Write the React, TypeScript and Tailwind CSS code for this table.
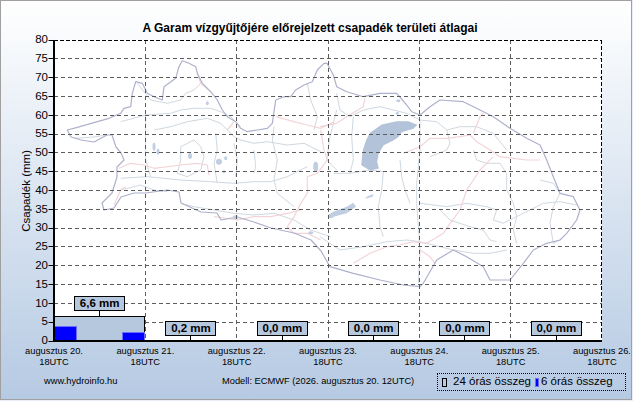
import React from "react";

type Pts = number[];

const conv = (ox: number, oy: number) => (a: Pts) => {
  const out: string[] = [];
  for (let i = 0; i < a.length; i += 2) {
    out.push(`${(ox + a[i] / 3).toFixed(1)},${(oy + a[i + 1] / 3).toFixed(1)}`);
  }
  return out.join(" ");
};
const z7 = conv(54, 50);
const z8 = conv(320, 50);

const OUTLINE =
  "67.3,130 77.3,127.3 97.3,121.7 109,118.3 120.7,113.3 124,108.3 130.7,106.7 132.3,93.3 135.7,81.7 142.3,83.3 147.3,93.3 154,96.7 162.3,100 164,86.7 175.7,78.3 179,66.7 182.3,60.7 189,63.3 195.7,66.7 197.3,73.3 202.3,83.3 210.7,91.7 217.3,100 222.3,110 227.3,116.7 235.7,121.7 240.7,128.3 247.3,131.7 257.3,130 267.3,128.3 272.3,123.3 275.7,100 284,96.7 290.7,96.7 295.7,90 304,85 312.3,81.7 317.3,70 324,63.3 327,63.3 333.3,75 336.7,86.7 346.7,91.7 363.3,96.7 380,93.3 396.7,93.3 406.7,105 411.7,111.7 420,115 430,106.7 440,100 463.3,101.7 480,110 493.3,116.7 510,128.3 526.7,138.3 540,145 546.7,160 553.3,176.7 560,193.3 573.3,196.7 580,210 576.7,220 566.7,233.3 560,240 546.7,243.3 533.3,250 523.3,263.3 510,280 490,280 483.3,266.7 466.7,256.7 453.3,250 436.7,260 423.3,283.3 420,286.7 403.3,285 380,280 353.3,273.3 330,266.7 321,251 311,240 294,233 271,228 254,222 237,217 221,220 217,213 201,212 181,203 179,192 167,190 146,193 134,193 121,197 114,208 104,210 102,203 112,193 117,177 117,167 124,160 121,153 116,147 112,135 107,135 94,142 81,140 71,137";

const RIVERS7: Pts[] = [
  [250, 100, 270, 125, 290, 150, 340, 160, 380, 150, 395, 130, 420, 120, 440, 100],
  [200, 215, 275, 195, 350, 190, 380, 180, 420, 175, 470, 175, 500, 185, 530, 200, 560, 230],
  [300, 240, 350, 230, 400, 215, 460, 205, 500, 220, 540, 260, 560, 270, 600, 280, 640, 275, 700, 285, 750, 280, 800, 305],
  [200, 385, 280, 380, 380, 390, 470, 395, 540, 400, 600, 395, 650, 395, 700, 380, 760, 350],
  [380, 460, 420, 470, 480, 480, 540, 490, 600, 495, 660, 490, 720, 510, 770, 540, 830, 560],
  [200, 420, 260, 405, 300, 420, 340, 425],
  [275, 190, 275, 330, 290, 380],
  [485, 250, 490, 300, 480, 340, 490, 400],
  [540, 280, 550, 330, 545, 380],
  [600, 300, 605, 350, 600, 370],
  [660, 230, 655, 270, 670, 330, 660, 390, 670, 430, 720, 470],
  [380, 290, 420, 270, 440, 290, 450, 320, 440, 360, 400, 380, 370, 370, 380, 330, 380, 290],
  [60, 265, 110, 262, 160, 255],
  [760, 100, 770, 150, 790, 200, 780, 240],
];
const PINK7: Pts[] = [
  [195, 355, 230, 340, 270, 345, 300, 355, 380, 345, 430, 340, 460, 345, 465, 375],
  [180, 465, 200, 420, 215, 410],
  [430, 70, 440, 100, 470, 125],
  [520, 240, 540, 215],
  [665, 200, 720, 215, 760, 225, 800, 235, 840, 215],
  [800, 240, 810, 300, 820, 330, 790, 370, 760, 380, 760, 430, 740, 460, 720, 500, 700, 530, 720, 550, 760, 550, 800, 570],
  [480, 500, 550, 510, 600, 500, 650, 500, 700, 490, 740, 480],
];
const RIVERS8: Pts[] = [
  [50, 130, 60, 180, 90, 200, 130, 180, 180, 170, 220, 180, 260, 190, 300, 210, 350, 215, 380, 240, 390, 280, 380, 300, 330, 320],
  [40, 370, 90, 370, 150, 360, 190, 365, 185, 420, 175, 470, 180, 530, 190, 560],
  [300, 210, 300, 300, 290, 400, 290, 460, 300, 600, 295, 700],
  [240, 330, 245, 380, 255, 420, 270, 460],
  [300, 460, 380, 470, 440, 460, 500, 470, 530, 480, 520, 510, 550, 520, 610, 490, 670, 460, 720, 455, 770, 465],
  [360, 480, 390, 510, 450, 530, 490, 540, 510, 570, 530, 575],
  [460, 300, 470, 330, 500, 340, 540, 340, 560, 370, 560, 420, 580, 460, 590, 500, 580, 540, 590, 580],
  [0, 560, 60, 600, 130, 590, 200, 575, 260, 570, 300, 575, 400, 600, 460, 610, 510, 610, 560, 600],
  [660, 390, 700, 400, 720, 430, 700, 470, 690, 520, 700, 580, 720, 570],
  [50, 180, 30, 260, 20, 330, 50, 360],
  [100, 200, 95, 260, 100, 330, 90, 370],
  [380, 240, 420, 230, 470, 230, 520, 250, 560, 300],
];
const PINK8: Pts[] = [
  [0, 230, 50, 220, 80, 200, 130, 170, 135, 145],
  [250, 310, 300, 290, 330, 265, 380, 265, 420, 260, 450, 255, 470, 275, 510, 300, 540, 320, 580, 325, 620, 330, 660, 330],
  [520, 320, 480, 360, 440, 420, 420, 480, 390, 520, 370, 550, 320, 580, 280, 575, 240, 585, 200, 590, 150, 610, 100, 640],
  [300, 600, 330, 620, 345, 640],
  [460, 250, 480, 200, 490, 190],
];

const LAKES: [number, number, number, number][] = [
  [154, 146.7, 1.5, 4],
  [158, 151.7, 1.5, 3],
  [190, 156, 2, 3],
  [219, 161.7, 3, 3],
  [225.7, 158.3, 1.5, 2],
  [224, 171.7, 1.5, 1.5],
  [207.3, 103.3, 1.5, 2],
  [315.7, 166.7, 2.5, 5],
  [235.7, 217.3, 3, 2],
  [330.7, 216, 3, 2],
  [310.7, 232.7, 2.5, 1.5],
  [398.3, 100.7, 2, 1.5],
  [397.3, 113.3, 1.5, 1.5],
];

const SCALE = 301 / 80;
const days = [
  { total: 6.6, label: "6,6 mm", six: [4.0, 0, 0, 2.4] },
  { total: 0.2, label: "0,2 mm", six: [0, 0, 0, 0] },
  { total: 0, label: "0,0 mm", six: [0, 0, 0, 0] },
  { total: 0, label: "0,0 mm", six: [0, 0, 0, 0] },
  { total: 0, label: "0,0 mm", six: [0, 0, 0, 0] },
  { total: 0, label: "0,0 mm", six: [0, 0, 0, 0] },
];
const xLabels = ["20", "21", "22", "23", "24", "25", "26"];
const yTicks = Array.from({ length: 17 }, (_, i) => 80 - i * 5);

const gridX = [1, 2, 3, 4, 5].map((i) => Math.floor(54 + (548 / 6) * i) + 0.5);
const gridY = Array.from({ length: 15 }, (_, i) => Math.floor(40 + (301 / 16) * (i + 1)) + 0.5);

function MapAndGrid() {
  return (
    <svg
      className="absolute inset-0 overflow-visible"
      width={548}
      height={301}
      viewBox="54 40 548 301"
    >
      <g fill="none" strokeLinejoin="round">
        {RIVERS7.map((r, i) => (
          <polyline key={"r7" + i} points={z7(r)} stroke="#cfd8e1" strokeWidth={1} />
        ))}
        {RIVERS8.map((r, i) => (
          <polyline key={"r8" + i} points={z8(r)} stroke="#cfd8e1" strokeWidth={1} />
        ))}
        {PINK7.map((r, i) => (
          <polyline key={"p7" + i} points={z7(r)} stroke="#f3d4d8" strokeWidth={1.2} />
        ))}
        {PINK8.map((r, i) => (
          <polyline key={"p8" + i} points={z8(r)} stroke="#f3d4d8" strokeWidth={1.2} />
        ))}
        <polygon points={OUTLINE} stroke="#adb1cb" strokeWidth={1.2} />
      </g>
      <polygon
        points={z8([150, 250, 185, 225, 230, 215, 265, 215, 290, 225, 280, 235, 245, 245, 235, 260, 220, 270, 190, 285, 175, 310, 170, 335, 175, 355, 150, 360, 125, 345, 130, 300, 140, 270])}
        fill="#b3c3da"
        stroke="#abbbd3"
        strokeWidth={0.8}
      />
      <polygon points={z8([100, 458, 108, 470, 80, 490, 40, 500, 25, 495, 40, 485, 80, 470])} fill="#c0cee2" />
      <polygon points={z8([140, 440, 160, 432, 158, 440, 135, 446])} fill="#c0cee2" />
      {LAKES.map(([cx, cy, rx, ry], i) => (
        <ellipse key={"l" + i} cx={cx} cy={cy} rx={rx} ry={ry} fill="#c0cee2" />
      ))}
      <g stroke="#5c5c5c" strokeWidth={1} strokeDasharray="4 3">
        {gridX.map((x) => (
          <line key={"gx" + x} x1={x} y1={40} x2={x} y2={341} />
        ))}
        {gridY.map((y) => (
          <line key={"gy" + y} x1={54} y1={y} x2={602} y2={y} />
        ))}
      </g>
    </svg>
  );
}

function Axes() {
  return (
    <svg
      className="absolute inset-0 overflow-visible pointer-events-none"
      width={548}
      height={301}
      viewBox="54 40 548 301"
    >
      <g stroke="#000" strokeWidth={1} strokeDasharray="4 2">
        <line x1={54} y1={40.5} x2={602} y2={40.5} />
        <line x1={601.5} y1={40} x2={601.5} y2={341} />
      </g>
      <g stroke="#000" strokeWidth={1}>
        {yTicks.map((v, i) => {
          const y = Math.floor(40 + (301 / 16) * i) + 0.5;
          return <line key={v} x1={48.5} y1={y} x2={54} y2={y} />;
        })}
      </g>
      <line x1={54} y1={40} x2={54} y2={342} stroke="#000" strokeWidth={2} />
      <line x1={53} y1={341} x2={602} y2={341} stroke="#000" strokeWidth={2} />
    </svg>
  );
}

function DayColumn({ d }: { d: (typeof days)[number] }) {
  const h = d.total * SCALE;
  return (
    <div className="flex-1 relative flex flex-col justify-end">
      <div className="flex flex-col items-center">
        <div className="w-[51px] h-[15px] border border-black bg-[#b6c8de] flex items-center justify-center text-[11.5px] font-bold leading-none text-black">
          {d.label}
        </div>
        <div className="w-px h-[5px] bg-black" />
      </div>
      {h >= 2 && (
        <div className="relative border border-black bg-[#b6c8de]" style={{ height: h }}>
          <div className="absolute left-[-1px] right-[-1px] bottom-[-1px] grid grid-cols-4 items-end">
            {d.six.map((v, i) =>
              v > 0 ? (
                <div
                  key={i}
                  className="bg-[#0000ff] border border-[#6c6cff]"
                  style={{ height: v * SCALE }}
                />
              ) : (
                <div key={i} />
              ),
            )}
          </div>
        </div>
      )}
    </div>
  );
}

export default function App() {
  return (
    <div className="w-[633px] h-[401px] bg-[#e7edf3] font-['Liberation_Sans',Arial,sans-serif] text-black">
      <div className="w-[632px] h-[400px] border border-[#a0a0a0] bg-linear-to-b from-white to-[#b6cae3] flex flex-col">
        {/* title */}
        <div className="h-[39px] flex items-end justify-center pr-[12px] pb-[5px]">
          <div className="text-[12px] font-bold leading-[14px] whitespace-nowrap">
            A Garam vízgyűjtőjére előrejelzett csapadék területi átlagai
          </div>
        </div>

        {/* chart row */}
        <div className="flex h-[301px]">
          <div className="w-[53px] flex pl-[18px] pr-[6px]">
            <div className="w-[14px] flex items-center justify-center">
              <span className="[writing-mode:vertical-rl] rotate-180 whitespace-nowrap text-[11.5px] leading-[14px]">
                Csapadék (mm)
              </span>
            </div>
            <div className="flex-1 flex flex-col justify-between">
              {yTicks.map((v) => (
                <div key={v} className="h-0 flex items-center justify-end">
                  <span className="text-[11.5px] leading-none">{v}</span>
                </div>
              ))}
            </div>
          </div>
          <div className="w-[548px] h-[301px] relative bg-white">
            <MapAndGrid />
            <div className="absolute inset-0 flex">
              {days.map((d, i) => (
                <DayColumn key={i} d={d} />
              ))}
            </div>
            <Axes />
          </div>
        </div>

        {/* x labels */}
        <div className="ml-[53px] w-[548px] pt-[5px] flex justify-between">
          {xLabels.map((l) => (
            <div key={l} className="w-0 flex justify-center">
              <div className="flex flex-col items-center whitespace-nowrap text-[9.3px] leading-[10.5px]">
                <span>augusztus {l}.</span>
                <span>18UTC</span>
              </div>
            </div>
          ))}
        </div>

        {/* footer */}
        <div className="mt-[6px] h-[18px] flex items-center pl-[43px]">
          <div className="w-[178px] text-[9.3px] whitespace-nowrap">www.hydroinfo.hu</div>
          <div className="w-[215px] text-[9.3px] whitespace-nowrap">
            Modell: ECMWF (2026. augusztus 20. 12UTC)
          </div>
          <div className="w-[189px] h-[18px] border border-dotted border-black flex items-center pl-[4px] text-[11.5px] whitespace-nowrap">
            <div className="w-[5px] h-[9px] border border-black" />
            <span className="ml-[6px]">24 órás összeg</span>
            <div className="ml-[4px] w-[4px] h-[9px] bg-[#0000ff] border border-[#6c6cff]" />
            <span className="ml-[2px]">6 órás összeg</span>
          </div>
        </div>
      </div>
    </div>
  );
}
